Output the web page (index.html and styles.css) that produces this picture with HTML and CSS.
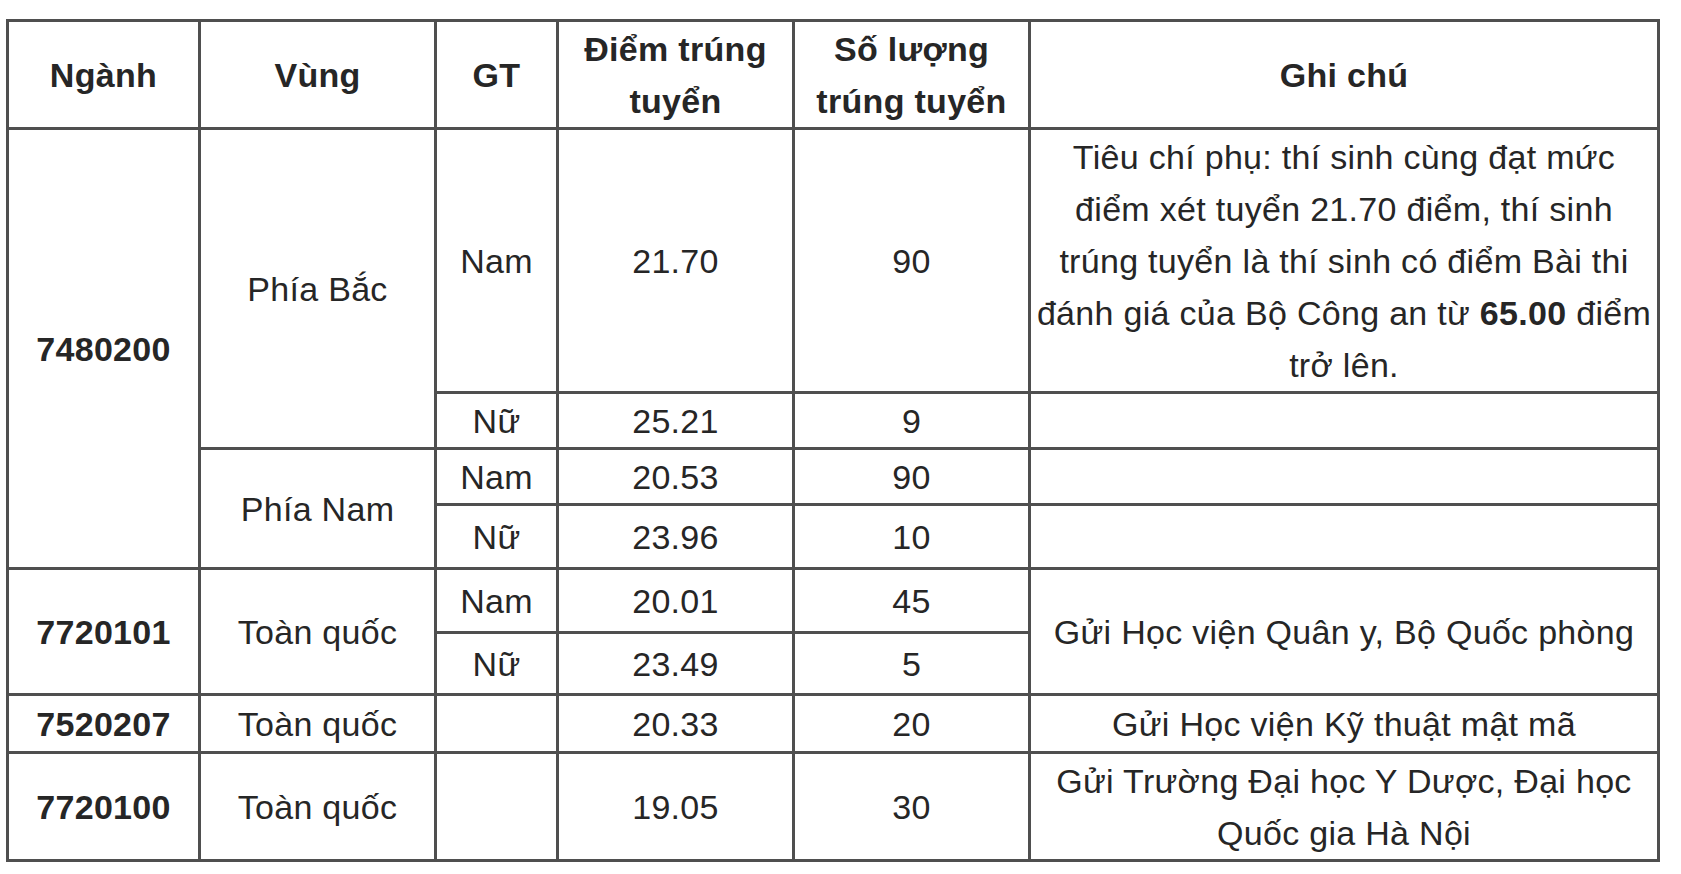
FILE: index.html
```html
<!DOCTYPE html>
<html lang="vi">
<head>
<meta charset="utf-8">
<title>Điểm trúng tuyển</title>
<link rel="stylesheet" href="styles.css">
</head>
<body>
<table class="scores">
  <colgroup>
    <col class="c-nganh">
    <col class="c-vung">
    <col class="c-gt">
    <col class="c-diem">
    <col class="c-sl">
    <col class="c-note">
  </colgroup>
  <thead>
    <tr class="r-head">
      <th>Ngành</th>
      <th>Vùng</th>
      <th>GT</th>
      <th>Điểm trúng<br>tuyển</th>
      <th>Số lượng<br>trúng tuyển</th>
      <th>Ghi chú</th>
    </tr>
  </thead>
  <tbody>
    <tr class="r1">
      <td class="code" rowspan="4">7480200</td>
      <td rowspan="2">Phía Bắc</td>
      <td>Nam</td>
      <td>21.70</td>
      <td>90</td>
      <td class="note">Tiêu chí phụ: thí sinh cùng đạt mức<br>điểm xét tuyển 21.70 điểm, thí sinh<br>trúng tuyển là thí sinh có điểm Bài thi<br>đánh giá của Bộ Công an từ <b>65.00</b> điểm<br>trở lên.</td>
    </tr>
    <tr class="r2">
      <td>Nữ</td>
      <td>25.21</td>
      <td>9</td>
      <td></td>
    </tr>
    <tr class="r3">
      <td rowspan="2">Phía Nam</td>
      <td>Nam</td>
      <td>20.53</td>
      <td>90</td>
      <td></td>
    </tr>
    <tr class="r4">
      <td>Nữ</td>
      <td>23.96</td>
      <td>10</td>
      <td></td>
    </tr>
    <tr class="r5">
      <td class="code" rowspan="2">7720101</td>
      <td rowspan="2">Toàn quốc</td>
      <td>Nam</td>
      <td>20.01</td>
      <td>45</td>
      <td class="note" rowspan="2">Gửi Học viện Quân y, Bộ Quốc phòng</td>
    </tr>
    <tr class="r6">
      <td>Nữ</td>
      <td>23.49</td>
      <td>5</td>
    </tr>
    <tr class="r7">
      <td class="code">7520207</td>
      <td>Toàn quốc</td>
      <td></td>
      <td>20.33</td>
      <td>20</td>
      <td class="note">Gửi Học viện Kỹ thuật mật mã</td>
    </tr>
    <tr class="r8">
      <td class="code">7720100</td>
      <td>Toàn quốc</td>
      <td></td>
      <td>19.05</td>
      <td>30</td>
      <td class="note">Gửi Trường Đại học Y Dược, Đại học<br>Quốc gia Hà Nội</td>
    </tr>
  </tbody>
</table>
</body>
</html>
```
FILE: styles.css
```css
html, body {
  margin: 0;
  padding: 0;
  background: #ffffff;
}

body {
  font-family: "Liberation Sans", Arial, sans-serif;
  color: #262626;
}

.scores {
  border-collapse: collapse;
  table-layout: fixed;
  width: 1654px;
  margin: 19px 0 0 6px;
  font-size: 34px;
  letter-spacing: 0.3px;
  line-height: 52px;
}

.scores th,
.scores td {
  border: 3px solid #4f4f4f;
  padding: 0 2px;
  text-align: center;
  vertical-align: middle;
  white-space: nowrap;
}

.scores th {
  font-weight: bold;
}

.c-nganh { width: 192px; }
.c-vung { width: 236px; }
.c-gt { width: 122px; }
.c-diem { width: 236px; }
.c-sl { width: 236px; }
.c-note { width: 629px; }

.r-head { height: 108px; }
.r1 { height: 264px; }
.r2 { height: 56px; }
.r3 { height: 56px; }
.r4 { height: 64px; }
.r5 { height: 64px; }
.r6 { height: 62px; }
.r7 { height: 58px; }
.r8 { height: 108px; }

.code {
  font-weight: bold;
}

.note b {
  font-weight: bold;
}
```
